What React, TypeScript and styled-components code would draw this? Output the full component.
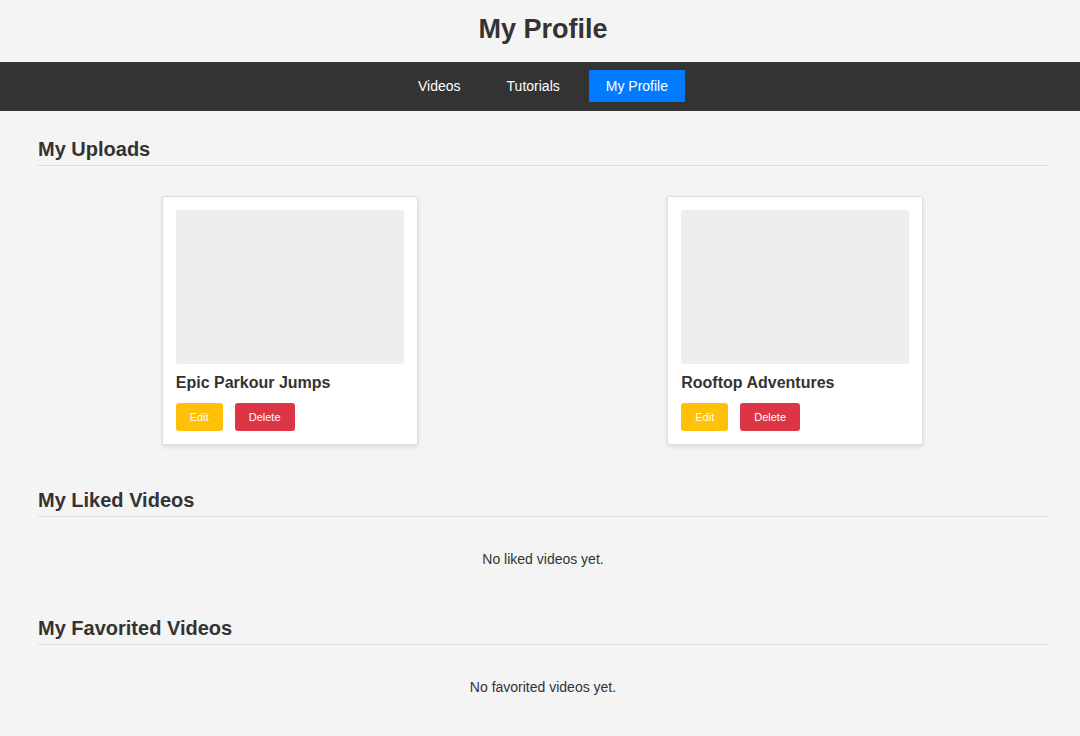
import React from "react";
import styled, { createGlobalStyle } from "styled-components";

const GlobalStyle = createGlobalStyle`
  html, body {
    margin: 0;
    padding: 0;
    background: #f4f4f4;
    font-family: "Liberation Sans", Arial, Helvetica, sans-serif;
    color: #333;
  }
`;

const Header = styled.header`
  padding: 13px 0 17px 6px;
  text-align: center;
`;

const Title = styled.h1`
  margin: 0;
  font-size: 27px;
  line-height: 32px;
  font-weight: bold;
  color: #333;
`;

const Nav = styled.nav`
  background: #333;
  display: flex;
  justify-content: center;
  gap: 12px;
  padding: 8px 0 9px 6px;
`;

const NavLink = styled.a<{ $active?: boolean }>`
  display: block;
  padding: 8px 17px;
  font-size: 14px;
  line-height: 16px;
  color: #fff;
  text-decoration: none;
  background: ${(p) => (p.$active ? "#007bff" : "transparent")};
`;

const Main = styled.main`
  margin: 0 32px 0 38px;
  padding-top: 27px;
`;

const Section = styled.section`
  display: flex;
  flex-direction: column;
`;

const SectionTitle = styled.h2`
  margin: 0;
  font-size: 20px;
  line-height: 23px;
  font-weight: bold;
  padding-bottom: 4px;
  border-bottom: 1px solid #ddd;
  color: #333;
`;

const CardGrid = styled.div`
  display: grid;
  grid-template-columns: 1fr 1fr;
  justify-items: center;
  margin: 30px 0 44px -1px;
`;

const Card = styled.div`
  width: 256px;
  box-sizing: border-box;
  background: #fff;
  border: 1px solid #ddd;
  border-radius: 2px;
  box-shadow: 0 2px 4px rgba(0, 0, 0, 0.1);
  padding: 13px;
  display: flex;
  flex-direction: column;
`;

const Thumb = styled.div`
  height: 154px;
  background: #eee;
  border-radius: 3px;
`;

const CardTitle = styled.h3`
  margin: 10px 0 11px;
  font-size: 16px;
  line-height: 18px;
  font-weight: bold;
  color: #333;
`;

const Actions = styled.div`
  display: flex;
  gap: 12px;
`;

const ActionButton = styled.button<{ $kind: "edit" | "delete" }>`
  height: 28px;
  padding: 0 14px;
  border: none;
  border-radius: 3px;
  font-family: inherit;
  font-size: 11px;
  color: #fff;
  background: ${(p) => (p.$kind === "edit" ? "#ffc107" : "#dc3545")};
  cursor: pointer;
`;

const Empty = styled.p`
  margin: 34px 0 50px;
  text-align: center;
  font-size: 14px;
  line-height: 16px;
  color: #333;
`;

const uploads = ["Epic Parkour Jumps", "Rooftop Adventures"];

export default function App() {
  return (
    <>
      <GlobalStyle />
      <Header>
        <Title>My Profile</Title>
      </Header>
      <Nav>
        <NavLink href="#">Videos</NavLink>
        <NavLink href="#">Tutorials</NavLink>
        <NavLink href="#" $active>
          My Profile
        </NavLink>
      </Nav>
      <Main>
        <Section>
          <SectionTitle>My Uploads</SectionTitle>
          <CardGrid>
            {uploads.map((t) => (
              <Card key={t}>
                <Thumb />
                <CardTitle>{t}</CardTitle>
                <Actions>
                  <ActionButton $kind="edit">Edit</ActionButton>
                  <ActionButton $kind="delete">Delete</ActionButton>
                </Actions>
              </Card>
            ))}
          </CardGrid>
        </Section>
        <Section>
          <SectionTitle>My Liked Videos</SectionTitle>
          <Empty>No liked videos yet.</Empty>
        </Section>
        <Section>
          <SectionTitle>My Favorited Videos</SectionTitle>
          <Empty>No favorited videos yet.</Empty>
        </Section>
      </Main>
    </>
  );
}
